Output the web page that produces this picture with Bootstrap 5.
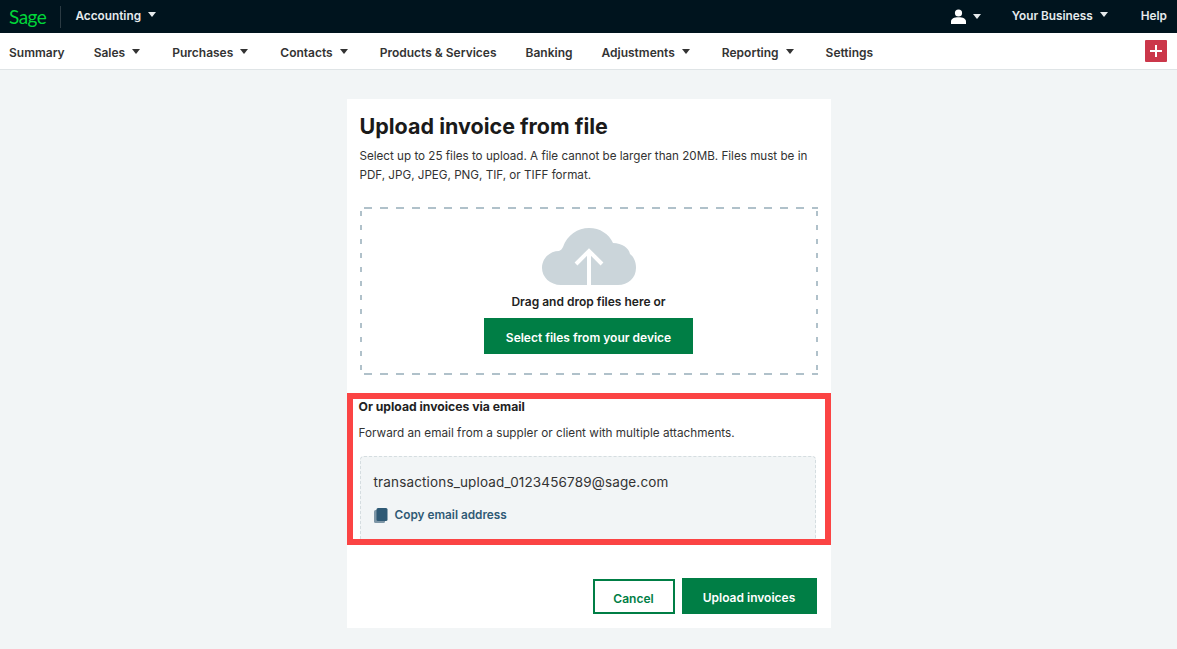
<!DOCTYPE html>
<html lang="en">
<head>
  <meta charset="UTF-8">
  <meta name="viewport" content="width=device-width, initial-scale=1">
  <title>Upload invoice from file</title>
  <link href="https://cdn.jsdelivr.net/npm/bootstrap@5.3.2/dist/css/bootstrap.min.css" rel="stylesheet">
  <script src="https://cdn.jsdelivr.net/npm/bootstrap@5.3.2/dist/js/bootstrap.bundle.min.js"></script>
  <style>
    html, body { height: 100%; }
    body { background: #f2f5f6; font-family: Inter, "Liberation Sans", sans-serif; font-size: 12px; color: #333; overflow: hidden; }
    .dropdown-toggle::after { border-top-width: 5px; border-left-width: 4px; border-right-width: 4px; margin-left: 7px; vertical-align: 3px; }

    /* top bar */
    .top-bar { height: 33px; background: #00141e; color: #e6ebed; font-weight: 600; font-size: 11.8px; padding: 0 10px 0 9px; }
    .sage-logo { font-family: Lato, sans-serif; font-size: 19px; font-weight: 400; color: #00d639; letter-spacing: -.5px; line-height: 1; }
    .top-divider { width: 1px; height: 22px; background: #2b3b43; margin: 0 14px; }
    .user-menu { margin-right: 31px; }
    .biz-menu { margin-right: 33px; }
    .user-icon { width: 15px; height: 15px; }

    /* second bar */
    .main-nav { height: 37px; background: #fff; border-bottom: 1px solid #dfe4e6; padding: 0 10px 0 9px; font-weight: 600; font-size: 12px; color: #333; }
    .main-nav .item { margin-right: 29px; padding-top: 3px; }
    .main-nav .item.dropdown-toggle { margin-right: 32px; }
    .add-btn { width: 22px; height: 22px; background: #cb374a; border-radius: 1px; }

    /* card */
    .upload-card { width: 484px; height: 529px; margin: 29px auto 0; background: #fff; border-right: 1px solid #dfe4e6; border-radius: 0; }
    .upload-head { padding: 14px 13px 0 13px; }
    .upload-title { font-size: 21.5px; font-weight: 700; color: #1a1a1a; line-height: 26px; margin: 0 0 8px; }
    .upload-text { font-size: 11.65px; line-height: 18.5px; color: #333; margin: 0; white-space: nowrap; }
    .drop-zone {
      height: 168px; margin: 23px 0 0 0; padding-top: 19px;
      background:
        linear-gradient(90deg, #b0c1ca 8px, transparent 8px) 4px 0 / 16px 2px repeat-x,
        linear-gradient(90deg, #b0c1ca 8px, transparent 8px) 4px 100% / 16px 2px repeat-x,
        linear-gradient(180deg, #b0c1ca 5px, transparent 5px) 0 4px / 2px 14px repeat-y,
        linear-gradient(180deg, #b0c1ca 5px, transparent 5px) 100% 4px / 2px 14px repeat-y;
    }
    .drop-label { font-weight: 600; font-size: 12px; color: #222; line-height: 16px; margin: 8px 0; }
    .sage-btn { background: #007e45; color: #fff; border: 0; border-radius: 0; font-weight: 600; font-size: 12px; }
    .sage-btn:hover { background: #00693a; color: #fff; }
    .select-btn { width: 209px; height: 36px; padding: 3px 0 0; }

    /* red box */
    .email-box { height: 152px; margin-top: 18px; border: 6px solid #fb4444; padding: 0 9px 0 7px; overflow: hidden; }
    .email-title { font-weight: 700; font-size: 12.2px; color: #222; line-height: 16px; margin: 0 0 10px -1px; }
    .email-text { font-size: 11.75px; line-height: 16px; margin: 0 0 15px -1px; white-space: nowrap; }
    .email-panel { height: 90px; background: #f2f5f6; border: 1px dashed #d5dde0; border-bottom: 0; border-radius: 4px 4px 0 0; padding: 15px 13px; }
    .email-addr { font-size: 13.5px; line-height: 20px; color: #333; margin-bottom: 15px; letter-spacing: .15px; }
    .copy-link { color: #2f5a75; font-weight: 600; font-size: 11.8px; text-decoration: none; }
    .copy-icon { width: 14px; height: 16px; margin-right: 7px; }

    /* actions */
    .actions { padding: 33px 14px 0 0; }
    .cancel-btn { width: 82px; height: 35px; background: #fff; color: #007e45; border: 2px solid #007e45; border-radius: 0; font-weight: 600; font-size: 12px; padding: 4px 0 0; margin-right: 7px; }
    .upload-btn { width: 135px; height: 36px; padding: 4px 0 0; }
  </style>
</head>
<body>
  <!-- barra superior -->
  <div class="top-bar d-flex align-items-center">
    <span class="sage-logo">Sage</span>
    <span class="top-divider"></span>
    <span class="dropdown-toggle">Accounting</span>
    <div class="ms-auto d-flex align-items-center">
      <span class="user-menu dropdown-toggle d-flex align-items-center">
        <svg class="user-icon" viewBox="0 0 15 15" fill="#fff"><circle cx="7.5" cy="4" r="3.6"/><path d="M0 15v-2.500C0 9.800 3 8.300 7.500 8.300S15 9.800 15 12.500V15z"/></svg>
      </span>
      <span class="biz-menu dropdown-toggle">Your Business</span>
      <span>Help</span>
    </div>
  </div>

  <!-- menu principal -->
  <nav class="main-nav d-flex align-items-center">
    <span class="item">Summary</span>
    <span class="item dropdown-toggle">Sales</span>
    <span class="item dropdown-toggle">Purchases</span>
    <span class="item dropdown-toggle">Contacts</span>
    <span class="item">Products &amp; Services</span>
    <span class="item">Banking</span>
    <span class="item dropdown-toggle">Adjustments</span>
    <span class="item dropdown-toggle">Reporting</span>
    <span class="item">Settings</span>
    <span class="add-btn ms-auto d-flex align-items-center justify-content-center">
      <svg width="12" height="12" viewBox="0 0 12 12" fill="#fff"><path d="M5 0h2v5h5v2H7v5H5V7H0V5h5z"/></svg>
    </span>
  </nav>

  <div class="card upload-card border-0">
    <div class="upload-head">
      <h1 class="upload-title">Upload invoice from file</h1>
      <p class="upload-text">Select up to 25 files to upload. A file cannot be larger than 20MB. Files must be in<br>PDF, JPG, JPEG, PNG, TIF, or TIFF format.</p>
      <div class="drop-zone d-flex flex-column align-items-center">
        <svg class="flex-shrink-0" width="96" height="60" viewBox="0 0 96 60">
          <path fill="#cbd5da" d="M20 59C9 59 1 51 1 42c0-10 8-17 17-17 2-1 3-2 4-4C26 9 37 2 48 2c11 0 20 6 24 15 9 0 16 5 17 11 4 3 6 8 6 14 0 10-8 17-18 17z"/>
          <path fill="none" stroke="#fff" stroke-width="4" d="M48 60V28M35 38l13-13 13 13"/>
        </svg>
        <div class="drop-label">Drag and drop files here or</div>
        <button class="btn sage-btn select-btn" type="button">Select files from your device</button>
      </div>
    </div>

    <div class="email-box">
      <div class="email-title">Or upload invoices via email</div>
      <p class="email-text">Forward an email from a suppler or client with multiple attachments.</p>
      <div class="email-panel">
        <div class="email-addr">transactions_upload_0123456789@sage.com</div>
        <a class="copy-link d-flex align-items-center" href="#">
          <svg class="copy-icon" viewBox="0 0 14 16"><rect x="0" y="2" width="11" height="13" rx="1.500" fill="#7e97a7"/><rect x="2.500" y="0" width="11" height="13" rx="1.500" fill="#2f5a75"/></svg>
          Copy email address
        </a>
      </div>
    </div>

    <div class="actions d-flex justify-content-end align-items-end">
      <button class="btn cancel-btn" type="button">Cancel</button>
      <button class="btn sage-btn upload-btn" type="button">Upload invoices</button>
    </div>
  </div>
</body>
</html>
